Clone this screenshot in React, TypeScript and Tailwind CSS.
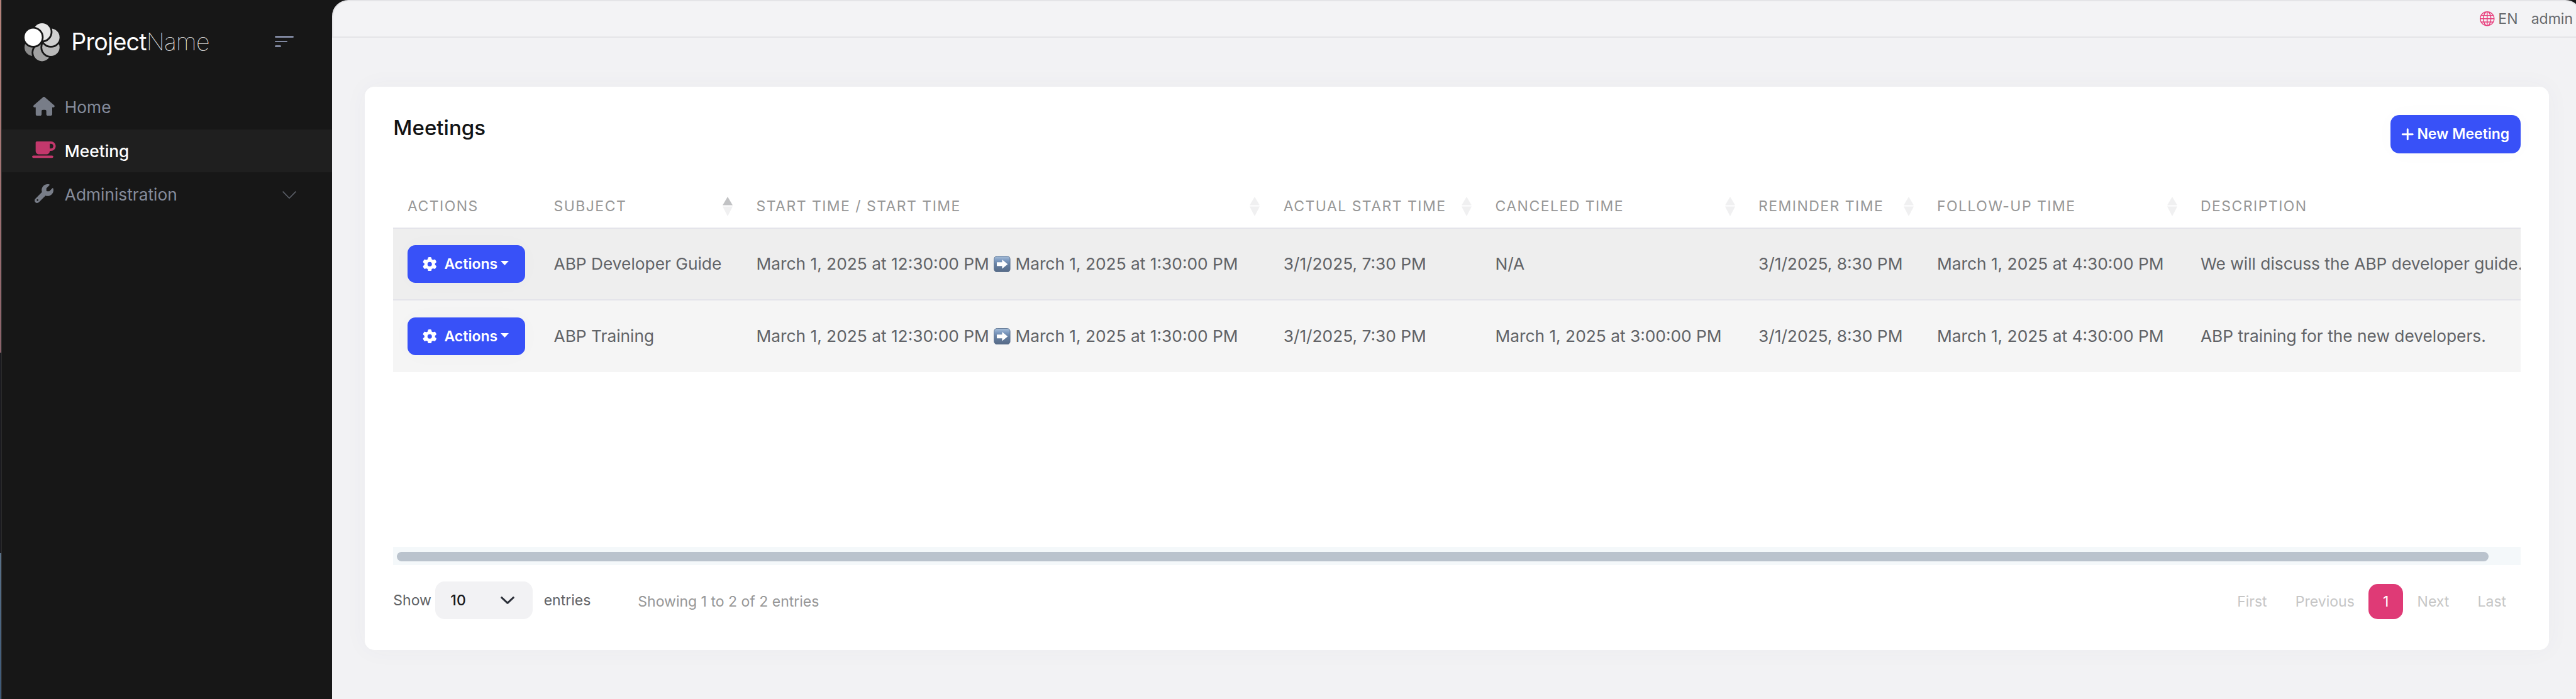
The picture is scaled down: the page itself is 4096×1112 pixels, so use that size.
import type { ReactNode } from "react";
import { FaGear, FaHouse, FaMugSaucer, FaPlus, FaWrench } from "react-icons/fa6";
import { BsGlobe } from "react-icons/bs";

type Meeting = {
  subject: string;
  start: string;
  end: string;
  actualStart: string;
  canceled: string;
  reminder: string;
  followUp: string;
  description: string;
};

const meetings: Meeting[] = [
  {
    subject: "ABP Developer Guide",
    start: "March 1, 2025 at 12:30:00 PM",
    end: "March 1, 2025 at 1:30:00 PM",
    actualStart: "3/1/2025, 7:30 PM",
    canceled: "N/A",
    reminder: "3/1/2025, 8:30 PM",
    followUp: "March 1, 2025 at 4:30:00 PM",
    description: "We will discuss the ABP developer guide.",
  },
  {
    subject: "ABP Training",
    start: "March 1, 2025 at 12:30:00 PM",
    end: "March 1, 2025 at 1:30:00 PM",
    actualStart: "3/1/2025, 7:30 PM",
    canceled: "March 1, 2025 at 3:00:00 PM",
    reminder: "3/1/2025, 8:30 PM",
    followUp: "March 1, 2025 at 4:30:00 PM",
    description: "ABP training for the new developers.",
  },
];

const columns: { label: string; sort?: "asc" | "none" }[] = [
  { label: "ACTIONS" },
  { label: "SUBJECT", sort: "asc" },
  { label: "START TIME / START TIME", sort: "none" },
  { label: "ACTUAL START TIME", sort: "none" },
  { label: "CANCELED TIME", sort: "none" },
  { label: "REMINDER TIME", sort: "none" },
  { label: "FOLLOW-UP TIME", sort: "none" },
  { label: "DESCRIPTION" },
];

const gridColumns = "grid grid-cols-[232.5px_322px_838.2px_336.8px_418.5px_284px_419px_600px]";

function Logo() {
  return (
    <svg viewBox="66 59 178 193" className="h-[60.4px] w-[55.7px] shrink-0">
      <g stroke="#171717" strokeWidth="18" className="[paint-order:stroke]">
        <circle cx="110" cy="181" r="44" fill="#8b8b8b" />
        <circle cx="155" cy="208" r="44" fill="#a1a1a1" />
        <circle cx="200" cy="181" r="44" fill="#b9b9b9" />
        <circle cx="200" cy="130" r="44" fill="#d0d0d0" />
        <circle cx="155" cy="103" r="44" fill="#e7e7e7" />
        <circle cx="110" cy="130" r="44" fill="#ffffff" />
      </g>
    </svg>
  );
}

function NavItem({ icon, label, active = false, expandable = false }: { icon: ReactNode; label: string; active?: boolean; expandable?: boolean }) {
  return (
    <a
      className={`flex h-[67.6px] items-center gap-[13.8px] pr-[57.5px] pl-[48px] text-[26.3px] ${
        active ? "bg-[#1f1f1f] font-medium text-white" : "text-[#858c9c]"
      }`}
    >
      <span className={`mb-1 flex w-[38px] justify-center ${active ? "text-[#c3386c]" : "text-[#787d88]"}`}>{icon}</span>
      <span>{label}</span>
      {expandable && (
        <svg viewBox="0 0 22 12" fill="none" stroke="#5b5f68" strokeWidth="1.6" className="ml-auto h-3 w-[22px]">
          <path d="M0.6 0.6 11 11.2 21.4 0.6" />
        </svg>
      )}
    </a>
  );
}

function Sidebar() {
  return (
    <aside className="flex w-[528px] shrink-0 bg-[#171717]">
      <div className="flex w-[2px] shrink-0 flex-col">
        <div className="h-[561px] bg-linear-to-b from-[#b5827a] to-[#8b636b]" />
        <div className="h-[319px] bg-[#1b1b20]" />
        <div className="flex-1 bg-linear-to-b from-[#5a7188] to-[#3d5877]" />
      </div>
      <div className="w-px shrink-0 bg-[#2b2b2b]" />
      <div className="flex-1">
        <div className="flex h-[135px] items-center pr-[61.5px] pl-[36.4px]">
          <Logo />
          <div className="ml-[18.2px] text-[37.6px] tracking-[-0.75px] text-white">
            Project<span className="font-thin">Name</span>
          </div>
          <div className="mb-[3px] ml-auto flex w-[29.5px] flex-col gap-[5px]">
            <div className="h-[2.6px] w-full rounded-full bg-[#8088a0]" />
            <div className="h-[2.6px] w-[19.5px] rounded-full bg-[#8088a0]" />
            <div className="h-[2.6px] w-[9.7px] rounded-full bg-[#8088a0]" />
          </div>
        </div>
        <nav className="flex flex-col gap-[1.9px] pt-[2px]">
          <NavItem icon={<FaHouse className="h-[30px] w-[33.8px]" />} label="Home" />
          <NavItem icon={<FaMugSaucer className="h-[30px] w-[37.6px]" />} label="Meeting" active />
          <NavItem icon={<FaWrench className="h-[30px] w-[30px]" />} label="Administration" expandable />
        </nav>
      </div>
    </aside>
  );
}

function TopBar() {
  return (
    <header className="-mr-[9px] flex h-[60px] shrink-0 items-center justify-end rounded-t-[26px] border-2 border-[#e4e4e7] bg-[#f3f3f5] pr-[12px] text-[23px] text-[#66686c]">
      <BsGlobe className="mr-[5.6px] h-[23.5px] w-[23.5px] text-[#e83e7c]" />
      <span className="mr-[21.2px]">EN</span>
      <span>admin</span>
    </header>
  );
}

function SortArrows({ active }: { active: boolean }) {
  return (
    <svg viewBox="0 0 16 31" className="h-[31px] w-4 shrink-0">
      <path d="M8 0 16 13.6H0Z" fill={active ? "#c1c2c4" : "#f0f0f1"} />
      <path d="M0 15.6H16L8 31Z" fill="#f0f0f1" />
    </svg>
  );
}

function ArrowBadge() {
  return (
    <svg viewBox="0 0 28 28" className="inline-block h-[26.3px] w-[26.8px] align-[-4px]">
      <defs>
        <linearGradient id="badge" x1="0" y1="0" x2="0" y2="1">
          <stop offset="0" stopColor="#a9c0da" />
          <stop offset="0.25" stopColor="#7f9cc2" />
          <stop offset="0.5" stopColor="#6680a3" />
          <stop offset="1" stopColor="#566a86" />
        </linearGradient>
      </defs>
      <rect x="0.5" y="0.5" width="27" height="27" rx="5" fill="url(#badge)" stroke="#5c7290" />
      <path d="M5 10.8h9V6.5L23.5 14.2 14 21.8v-4.4H5Z" fill="#fff" />
    </svg>
  );
}

function ActionsButton() {
  return (
    <button className="flex h-[60px] w-[187px] items-center rounded-[12.5px] bg-[#3851f8] pl-[24.5px] text-[23px] font-semibold text-white shadow-[0_0_38px_rgba(0,0,0,0.02)]">
      <FaGear className="mr-[11.5px] h-[22.5px] w-[22.5px]" />
      Actions
      <svg viewBox="0 0 13 7" className="mb-[3px] ml-[5px] h-[7px] w-[13px]">
        <path d="M0 0H13L6.5 7Z" fill="#fff" />
      </svg>
    </button>
  );
}

function MeetingRow({ meeting, hovered }: { meeting: Meeting; hovered: boolean }) {
  const cells: ReactNode[] = [
    <ActionsButton />,
    meeting.subject,
    <div>
      {meeting.start} <ArrowBadge /> {meeting.end}
    </div>,
    meeting.actualStart,
    meeting.canceled,
    meeting.reminder,
    meeting.followUp,
    meeting.description,
  ];
  return (
    <div
      className={`${gridColumns} items-center border-t-2 border-[#e4e4ea] text-[26.3px] text-[#616367] ${
        hovered ? "h-[114px] bg-[#eeeeee]" : "h-[115.5px] bg-[#f5f5f5]"
      }`}
    >
      {cells.map((cell, i) => (
        <div key={i} className="px-[22.7px]">{cell}</div>
      ))}
    </div>
  );
}

function MeetingsTable() {
  return (
    <div className="h-[575px] overflow-hidden whitespace-nowrap">
      <div className={`${gridColumns} h-[67px] items-center text-[23px] tracking-[1.46px] text-[#979797]`}>
        {columns.map(({ label, sort }) => (
          <div key={label} className="flex items-center justify-between pr-[14.5px] pl-[22.7px]">
            <span>{label}</span>
            {sort && <SortArrows active={sort === "asc"} />}
          </div>
        ))}
      </div>
      {meetings.map((m, i) => (
        <MeetingRow key={m.subject} meeting={m} hovered={i === 0} />
      ))}
    </div>
  );
}

function TableFooter() {
  return (
    <div className="flex items-center text-[23px] text-[#606265]">
      <span>Show</span>
      <div className="ml-[6px] flex h-[60px] w-[155px] items-center justify-between rounded-[15px] bg-[#f2f2f4] pr-[28.5px] pl-[24.5px] font-medium text-[#17181a]">
        10
        <svg viewBox="0 0 22 12" fill="none" stroke="#2b2f38" strokeWidth="3" strokeLinecap="round" strokeLinejoin="round" className="h-3 w-[22px]">
          <path d="M1.7 1.7 11 10.3 20.3 1.7" />
        </svg>
      </div>
      <span className="ml-[17.8px]">entries</span>
      <span className="mt-1 ml-[75px] text-[#979797]">Showing 1 to 2 of 2 entries</span>
      <div className="mt-1 ml-auto flex items-center text-[#c6c6c6]">
        <span className="px-[22.6px]">First</span>
        <span className="px-[22.6px]">Previous</span>
        <span className="flex h-[56px] w-[54.6px] items-center justify-center rounded-[15px] bg-[#df3a76] text-white">1</span>
        <span className="px-[22.6px]">Next</span>
        <span className="px-[22.6px]">Last</span>
      </div>
    </div>
  );
}

export default function App() {
  return (
    <div className="flex h-[1112px] w-[4096px] overflow-hidden bg-[#171717] font-['Inter',sans-serif] leading-normal">
      <Sidebar />
      <div className="flex min-w-0 flex-1 flex-col">
        <TopBar />
        <main className="flex-1 bg-[#f2f2f4] pt-[78px] pr-[43.3px] pl-[52.3px]">
          <section className="h-[896px] rounded-[15px] bg-white px-[45px] pt-[45px] shadow-[0_0_38px_rgba(73,70,139,0.04)]">
            <div className="mb-[51px] flex h-[61px] items-start justify-between">
              <h1 className="text-[33.1px] leading-[40px] font-medium text-[#121314]">Meetings</h1>
              <button className="flex h-[61px] w-[206.6px] items-center rounded-[14px] bg-[#3851f8] pl-[17px] text-[23px] font-semibold text-white shadow-[0_0_38px_rgba(0,0,0,0.02)]">
                <FaPlus className="mr-[4.8px] h-[23.4px] w-[20.5px]" />
                New Meeting
              </button>
            </div>
            <MeetingsTable />
            <div className="mb-[26px] h-[29px] bg-[#f4f8fa] pt-[8px] pr-[51px] pl-[5.5px]">
              <div className="h-[15px] rounded-full bg-[#bac3cd]" />
            </div>
            <TableFooter />
          </section>
        </main>
      </div>
    </div>
  );
}
